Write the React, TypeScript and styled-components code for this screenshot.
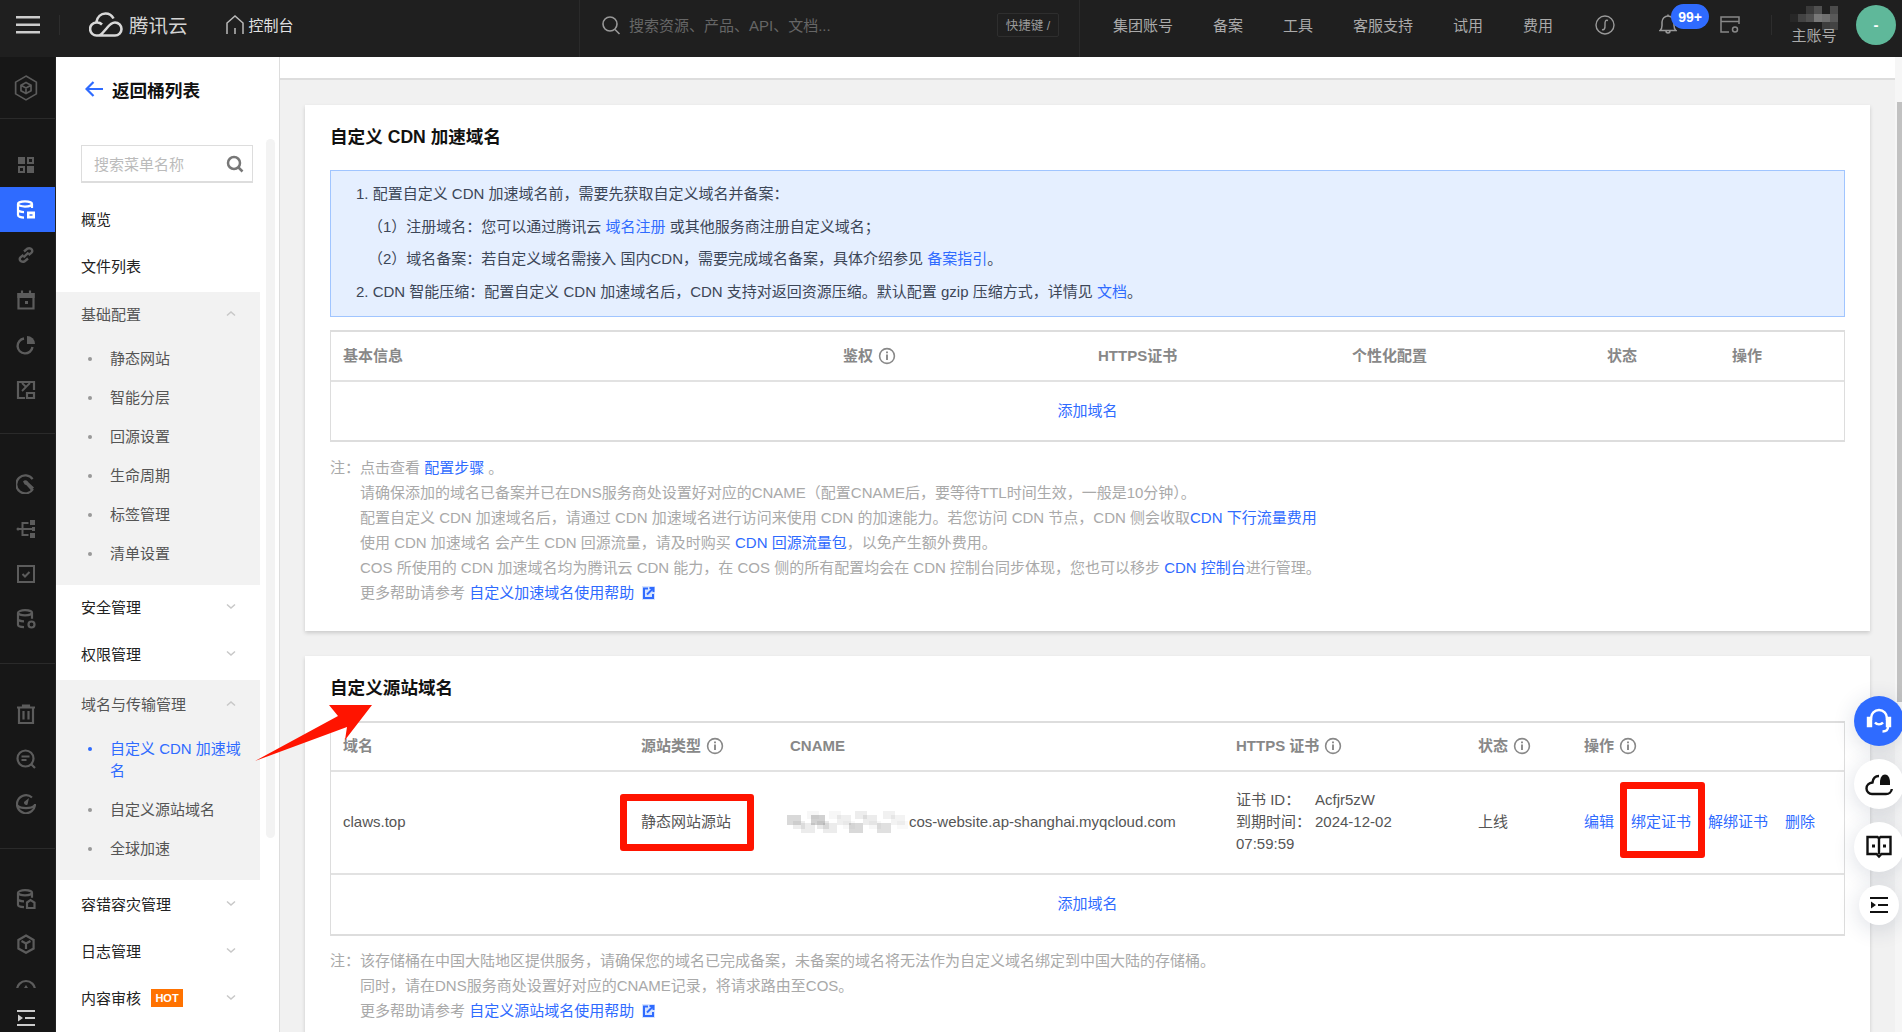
import React from 'react';
import styled, { createGlobalStyle } from 'styled-components';

const GlobalStyle = createGlobalStyle`
  html, body {
    margin: 0;
    padding: 0;
    background: #f1f1f1;
  }
  body {
    font-family: "Liberation Sans", "Noto Sans CJK SC", sans-serif;
    font-size: 15px;
    color: #444;
  }
  * {
    box-sizing: border-box;
  }
`;

const BLUE = '#2f6bff';
const RED = '#ff1400';

const Page = styled.div`
  position: relative;
  width: 1902px;
  height: 1032px;
  overflow: hidden;
  display: flex;
  flex-direction: column;
`;

/* ---------- top bar ---------- */

const TopBar = styled.header`
  height: 57px;
  flex: none;
  padding-bottom: 8px;
  display: flex;
  align-items: center;
  background: #1f1f1f;
  color: #aaa;
`;

const TopLeft = styled.div`
  width: 579px;
  height: 100%;
  display: flex;
  align-items: center;
  padding-left: 16px;
`;

const VDivider = styled.span<{ $left?: number; $right?: number }>`
  width: 1px;
  height: 20px;
  background: #2d2d2d;
  margin-left: ${p => p.$left ?? 0}px;
  margin-right: ${p => p.$right ?? 0}px;
`;

const LogoText = styled.span`
  font-size: 19.5px;
  color: #d4d4d4;
  margin-left: 6px;
  margin-right: 38px;
`;

const ConsoleLink = styled.span`
  color: #e2e2e2;
  margin-left: 5px;
`;

const TopSearch = styled.div`
  width: 501px;
  height: 57px;
  margin-bottom: -8px;
  padding-bottom: 8px;
  display: flex;
  align-items: center;
  padding-left: 21px;
  border-left: 1px solid #2a2a2a;
  border-right: 1px solid #2a2a2a;
  color: #666;
`;

const SearchHint = styled.span`
  margin-left: 8px;
  flex: 1;
`;

const ShortcutKey = styled.span`
  width: 62px;
  height: 24px;
  margin-right: 20px;
  border: 1px solid #2e2e2e;
  border-radius: 2px;
  font-size: 12.5px;
  color: #9a9a9a;
  display: flex;
  align-items: center;
  justify-content: center;
`;

const TopNav = styled.nav`
  display: flex;
  align-items: center;
  gap: 40px;
  padding-left: 33px;
`;

const TopTools = styled.div`
  display: flex;
  align-items: center;
  height: 100%;
`;

const CircleS = styled.svg`
  margin-left: 42px;
`;

const BellWrap = styled.span`
  position: relative;
  display: flex;
  margin-left: 44px;
  margin-right: 43px;
`;

const Badge = styled.span`
  position: absolute;
  left: 12px;
  top: -10px;
  width: 38px;
  height: 25px;
  border-radius: 13px;
  background: ${BLUE};
  color: #fff;
  font-size: 14px;
  font-weight: 700;
  display: flex;
  align-items: center;
  justify-content: center;
`;

const Account = styled.div`
  width: 46px;
  margin-left: 19px;
  height: 57px;
  margin-bottom: -8px;
  display: flex;
  flex-direction: column;
  align-items: center;
  padding-top: 4px;
  line-height: 20px;
  white-space: nowrap;
`;

const AccountRole = styled.span`
  margin-top: -4px;
`;

const Avatar = styled.span`
  width: 40px;
  height: 40px;
  margin-left: 19px;
  border-radius: 50%;
  background: #5fb89a;
  color: #fff;
  font-weight: 700;
  display: flex;
  align-items: center;
  justify-content: center;
`;

/* ---------- left rail ---------- */

const Body = styled.div`
  flex: 1;
  min-height: 0;
  display: flex;
`;

const Rail = styled.aside`
  width: 56px;
  flex: none;
  background: #171717;
  border-right: 1px solid #222;
  display: flex;
  flex-direction: column;
  overflow: hidden;
`;

const RailGroup = styled.div<{ $height: number; $pad: number; $last?: boolean }>`
  height: ${p => p.$height}px;
  flex: none;
  padding-top: ${p => p.$pad}px;
  border-bottom: ${p => (p.$last ? 'none' : '1px solid #2a2a2a')};
  overflow: hidden;
`;

const RailItem = styled.div<{ $active?: boolean }>`
  height: 45px;
  padding-right: 3px;
  display: flex;
  align-items: center;
  justify-content: center;
  background: ${p => (p.$active ? BLUE : 'transparent')};
  color: ${p => (p.$active ? '#fff' : '#5c5c5c')};
`;

const RailToggle = styled.div`
  height: 44px;
  flex: none;
  background: #171717;
  padding-right: 3px;
  padding-top: 16px;
  display: flex;
  align-items: center;
  justify-content: center;
  color: #ccc;
`;

/* ---------- side menu ---------- */

const Sidebar = styled.aside`
  width: 224px;
  flex: none;
  background: #fff;
  border-right: 1px solid #ddd;
  overflow: hidden;
  display: flex;
  flex-direction: column;
`;

const BackRow = styled.div`
  height: 82px;
  flex: none;
  display: flex;
  align-items: center;
  padding: 0 0 18px 29px;
  gap: 9px;
  font-size: 17.6px;
  font-weight: 700;
  color: #111;
`;

const SideBody = styled.div`
  display: flex;
`;

const Menu = styled.div`
  width: 204px;
  flex: none;
`;

const MenuTrack = styled.div`
  width: 9px;
  height: 699px;
  margin-left: 6px;
  border-radius: 5px;
  background: #f3f3f3;
`;

const SearchBox = styled.div`
  width: 172px;
  height: 38px;
  margin: 6px 0 12px 25px;
  border: 1px solid #ddd;
  border-bottom-width: 2px;
  padding: 0 8px 0 12px;
  display: flex;
  align-items: center;
  justify-content: space-between;
  color: #bbb;
`;

const PlainItems = styled.div<{ $gap: number }>`
  padding-bottom: ${p => p.$gap}px;
`;

const MenuRow = styled.div<{ $lift?: boolean }>`
  height: 47px;
  padding: 0 24px ${p => (p.$lift ? '3px' : '0')} 25px;
  display: flex;
  align-items: center;
  color: #222;
`;

const MenuGroup = styled.div<{ $end: number }>`
  background: #f2f2f2;
  padding-bottom: ${p => p.$end}px;
`;

const GroupHead = styled(MenuRow)<{ $h: number; $under: number }>`
  height: ${p => p.$h}px;
  padding-bottom: ${p => p.$under}px;
  color: #555;
`;

const Chevron = styled.svg`
  margin-left: auto;
  color: #c8c8c8;
`;

const SubItem = styled.div<{ $active?: boolean }>`
  display: flex;
  align-items: flex-start;
  padding: 8.5px 12px 8.5px 32px;
  line-height: 22px;
  color: ${p => (p.$active ? BLUE : '#555')};
`;

const Dot = styled.span<{ $active?: boolean }>`
  width: 4px;
  height: 4px;
  flex: none;
  margin: 9px 18px 0 0;
  border-radius: 50%;
  background: ${p => (p.$active ? BLUE : '#999')};
`;

const HotTag = styled.span`
  width: 32px;
  height: 18px;
  margin-left: 10px;
  background: #ff7200;
  color: #fff;
  font-size: 11px;
  font-weight: 700;
  display: flex;
  align-items: center;
  justify-content: center;
`;

/* ---------- main ---------- */

const Main = styled.main`
  flex: 1;
  min-width: 0;
  display: flex;
`;

const Content = styled.div`
  width: 1615px;
  flex: none;
  overflow: hidden;
`;

const CrumbStrip = styled.div`
  height: 23px;
  background: #fff;
  border-bottom: 2px solid #ddd;
`;

const Cards = styled.div`
  padding: 25px 25px 0;
  display: flex;
  flex-direction: column;
  gap: 25px;
`;

const Card = styled.section`
  background: #fff;
  padding: 20px 25px 25.5px 25px;
  box-shadow: 0 2px 4px rgba(0, 0, 0, 0.16);
`;

const CardTitle = styled.h2`
  margin: 0;
  font-size: 17.6px;
  line-height: 24px;
  font-weight: 700;
  color: #111;
`;

const InfoBox = styled.div`
  margin-top: 21px;
  height: 147px;
  padding: 7px 25px;
  background: #e5efff;
  border: 1px solid #a0c5ff;
  line-height: 32.7px;
  color: #3c4657;
`;

const InfoLine = styled.div<{ $indent?: boolean }>`
  padding-left: ${p => (p.$indent ? '12px' : '0')};
`;

const A = styled.span`
  color: ${BLUE};
`;

const Table = styled.div<{ $top: number }>`
  margin-top: ${p => p.$top}px;
  border: 1px solid #ddd;
  border-width: 2px 1px 2px 1px;
`;

const Grid = styled.div<{ $cols: string; $height: number; $head?: boolean }>`
  display: grid;
  grid-template-columns: ${p => p.$cols};
  align-items: center;
  height: ${p => p.$height}px;
  padding-left: 12px;
  border-bottom: 2px solid #e2e2e2;
  font-weight: ${p => (p.$head ? 700 : 400)};
  color: ${p => (p.$head ? '#888' : '#555')};
  line-height: 22px;
`;

const HeadCell = styled.span`
  display: flex;
  align-items: center;
  gap: 5px;
`;

const AddRow = styled.div<{ $height: number }>`
  height: ${p => p.$height}px;
  display: flex;
  align-items: center;
  justify-content: center;
  padding-bottom: 3px;
  color: ${BLUE};
`;

const Notes = styled.div<{ $top: number }>`
  margin-top: ${p => p.$top}px;
  line-height: 25px;
  color: #a9a9a9;
  white-space: nowrap;
`;

const NoteLine = styled.div<{ $indent?: boolean }>`
  padding-left: ${p => (p.$indent ? '30px' : '0')};
`;

const ExtIcon = styled.svg`
  margin-left: 8px;
  vertical-align: -2px;
`;

const RowActions = styled.div`
  display: flex;
  gap: 17px;
  color: ${BLUE};
  white-space: nowrap;
`;

const Marked = styled.span<{ $top: number; $bottom: number; $left: number; $right: number }>`
  position: relative;
  display: inline-block;
  &::after {
    content: '';
    position: absolute;
    top: -${p => p.$top}px;
    bottom: -${p => p.$bottom}px;
    left: -${p => p.$left}px;
    right: -${p => p.$right}px;
    border: 7px solid ${RED};
    border-radius: 3px;
  }
`;

const CnameCell = styled.div`
  display: flex;
  align-items: center;
  gap: 1px;
  margin-left: -3px;
  white-space: nowrap;
`;

const CertLine = styled.div`
  display: grid;
  grid-template-columns: 79px auto;
`;

const ScrollBar = styled.div`
  flex: 1;
  background: #f6f6f6;
  padding: 45px 0 0 2px;
`;

const ScrollThumb = styled.div`
  height: 600px;
  background: #c1c1c1;
`;

/* ---------- overlays ---------- */

const Arrow = styled.svg`
  position: absolute;
  left: 0;
  top: 0;
  pointer-events: none;
`;

const FloatStack = styled.div`
  position: absolute;
  left: 1854px;
  top: 696px;
  width: 50px;
  display: flex;
  flex-direction: column;
  align-items: center;
  gap: 13px;
`;

const FloatButton = styled.div<{ $size: number; $primary?: boolean }>`
  width: ${p => p.$size}px;
  height: ${p => p.$size}px;
  border-radius: 50%;
  background: ${p => (p.$primary ? BLUE : '#fff')};
  color: ${p => (p.$primary ? '#fff' : '#111')};
  box-shadow: 0 4px 22px rgba(30, 50, 90, 0.16);
  display: flex;
  align-items: center;
  justify-content: center;
`;

/* ---------- drawings ---------- */

type IconProps = { size?: number; children: React.ReactNode; sw?: number };

function Ico({ size = 20, children, sw = 2 }: IconProps) {
  return (
    <svg width={size} height={size} viewBox="0 0 20 20" fill="none" stroke="currentColor" strokeWidth={sw}>
      {children}
    </svg>
  );
}

function Info() {
  return (
    <svg width="18" height="18" viewBox="0 0 17 17" fill="none" stroke="#888" strokeWidth="1.5">
      <circle cx="8.5" cy="8.5" r="7" />
      <path d="M8.5 7.2v5" strokeWidth="1.8" />
      <path d="M8.5 4.2v1.7" strokeWidth="1.8" />
    </svg>
  );
}

function ChevronIcon({ up }: { up?: boolean }) {
  return (
    <Chevron width="10" height="7" viewBox="0 0 10 7" fill="none" stroke="currentColor" strokeWidth="1.5">
      <path d={up ? 'M1 5.5 5 2l4 3.5' : 'M1 1.5 5 5l4-3.5'} />
    </Chevron>
  );
}

function External() {
  return (
    <ExtIcon width="13" height="14" viewBox="0 0 13 14">
      <rect width="13" height="14" fill="#d6e4ff" />
      <path d="M6 2.5H2v9.5h9V8" fill="none" stroke={BLUE} strokeWidth="2" />
      <path d="M5 8.5 10.5 3M7.5 2h4v4" fill="none" stroke={BLUE} strokeWidth="2" />
    </ExtIcon>
  );
}

const mosaicLight = [
  [0, 0, .25], [14, 8, .12], [24, 0, .3], [36, 8, .12], [50, 0, .1], [62, 8, .25],
  [76, 0, .12], [90, 8, .2], [104, 0, .08],
];

const mosaicDark = [
  [0, 10, 0.04], [8, 10, 0.16], [16, 10, 0.22], [16, 2, 0.12], [24, 10, 0.4], [24, 2, 0.22],
  [32, 10, 0.36], [32, 18, 0.14], [40, 2, 0.2], [40, 10, 0.26], [40, 18, 0.16],
];

function Mosaic({ width, dark }: { width: number; dark?: boolean }) {
  return (
    <svg width={width} height={dark ? 26 : 22}>
      {dark
        ? mosaicDark.map(([x, y, o], i) => <rect key={i} x={x} y={y} width={8} height={8} fill="#fff" opacity={o} />)
        : mosaicLight.map(([x, y, o], i) => (
            <g key={i}>
              <rect x={x} y={y + 4} width={14} height={10} fill="#666" opacity={o} />
              <rect x={x + 6} y={(y + 10) % 18} width={12} height={8} fill="#999" opacity={o * 0.7} />
            </g>
          ))}
    </svg>
  );
}

const railGroups: { height: number; pad: number; active?: number; icons: React.ReactNode[] }[] = [
  {
    height: 62,
    pad: 8,
    icons: [
      <Ico size={28} sw={1.2}>
        <path d="M10 1.5 17.4 5.8v8.4L10 18.5l-7.4-4.3V5.8z" />
        <path d="M10 6l3.6 2v4L10 14l-3.6-2V8zM6.4 8 10 10l3.6-2M10 10v4" />
      </Ico>,
    ],
  },
  {
    height: 315,
    pad: 23,
    active: 1,
    icons: [
      <Ico>
        <path d="M2 2h7v7H2z" fill="currentColor" stroke="none" />
        <path d="M12 3h5v5h-5zM3 12h5v5H3z" />
        <path d="M11 11h7v7h-7z" fill="currentColor" stroke="none" />
      </Ico>,
      <Ico sw={2.2}>
        <ellipse cx="9" cy="4" rx="7" ry="2.6" />
        <path d="M2 4v11c0 1.5 3 2.6 6 2.6M16 4v4M2 9.5c0 1.5 3 2.6 6 2.6" />
        <path d="M11 11.5h8v7h-8z" fill="currentColor" stroke="none" />
        <path d="M13.5 15h3" stroke="#2f6bff" strokeWidth="1.4" />
      </Ico>,
      <Ico sw={2.4}>
        <path d="M8 6.5 11.5 3.6c2.3-1.2 5.4.6 4.6 3.2-.3 1-2 2-3.6 3.2M12 13.5 8.5 16.4c-2.3 1.2-5.4-.6-4.6-3.2.3-1 2-2 3.6-3.2" />
        <path d="M7.5 12.5 12.5 7.5" />
      </Ico>,
      <Ico sw={2.2}>
        <path d="M2.5 4h15v14.5h-15zM6 .5v4M14 .5v4" />
        <path d="M2.5 4h15v3h-15z" fill="currentColor" />
        <path d="M9 11h3v3H9z" fill="currentColor" stroke="none" />
      </Ico>,
      <Ico sw={2.4}>
        <path d="M8 3.5a7.5 7.5 0 1 0 8.5 8.5" />
        <path d="M11 1v8h8a8 8 0 0 0-8-8z" fill="currentColor" stroke="none" />
      </Ico>,
      <Ico sw={2.2}>
        <path d="M9 18H2V2h16v8" />
        <path d="M6 3l4 4 4-4M6 11l4-4" strokeWidth="1.8" />
        <path d="M11 13h7v5h-7z" />
      </Ico>,
    ],
  },
  {
    height: 230,
    pad: 27,
    icons: [
      <Ico sw={2.2}>
        <path d="M16.6 5.2A9 9 0 1 0 17 15" />
        <path d="M7 7.5c1.3-1.6 3.5-1.6 4.6-.2l1 1.3 5.4 5-2.8 2.8-5-5.4-1.5-.5L7 7.5z" fill="currentColor" stroke="none" />
      </Ico>,
      <Ico>
        <path d="M2 10h15M6.5 10V4h6M6.5 10v6h6" />
        <circle cx="2" cy="10" r="1.5" fill="currentColor" stroke="none" />
        <path d="M14 1h5v5h-5zM16 8h3v4h-3zM14 14h5v5h-5z" fill="currentColor" stroke="none" />
      </Ico>,
      <Ico>
        <path d="M2 2h16v16H2z" />
        <path d="M6.5 10 9 12.5l4.5-4.5" />
      </Ico>,
      <Ico sw={2.2}>
        <ellipse cx="9" cy="3.8" rx="7" ry="2.6" />
        <path d="M2 3.8v12c0 1.3 2.5 2.2 6 2.4M16 3.8v6M2 10c0 1.3 3 2.3 6 2.3" />
        <circle cx="15.5" cy="15.5" r="3" />
      </Ico>,
    ],
  },
  {
    height: 185,
    pad: 27,
    icons: [
      <Ico sw={2.2}>
        <path d="M1 3.5h18M7 3.5V1.5h6v2M3 3.5V19h14V3.5" />
        <path d="M7.5 7v8.5M12.5 7v8.5" />
      </Ico>,
      <Ico sw={2.2}>
        <circle cx="9.5" cy="9.5" r="8" />
        <path d="M5.5 7.5h8M5.5 11h5M15.5 15.5 19 19" />
      </Ico>,
      <Ico sw={2.2}>
        <path d="M16 3.5A9 9 0 1 0 19 10M1.5 11.5c3 3.5 14 3.5 17 0" />
        <path d="M8 8l5-4-1.5 6.5c-.8 1.4-4 .2-3.5-2.5z" fill="currentColor" stroke="none" />
      </Ico>,
    ],
  },
  {
    height: 139,
    pad: 27,
    icons: [
      <Ico sw={2.2}>
        <ellipse cx="9" cy="3.8" rx="7" ry="2.6" />
        <path d="M2 3.8v12c0 1.3 2.5 2.2 6 2.4M16 3.8v5M2 10c0 1.3 3 2.3 6 2.3" />
        <path d="M11 13.5l3.5-2.5 4 2.5V19H11z" />
      </Ico>,
      <Ico sw={2.2}>
        <path d="M10 1.5 17.6 6v8.5L10 18.8l-7.6-4.3V6z" />
        <path d="M10 9.5 5.5 7M10 9.5 14.5 7M10 9.5V15" />
      </Ico>,
      <Ico sw={2.2}>
        <circle cx="10" cy="11" r="9" />
        <path d="M10 6l4 6H6z" fill="currentColor" stroke="none" />
      </Ico>,
    ],
  },
];

function IndentIcon({ size = 18 }: { size?: number }) {
  return (
    <svg width={size} height={size} viewBox="0 0 18 18" fill="currentColor">
      <path d="M0 1h18v2H0zM8 8h10v2H8zM0 15h18v2H0zM1 5.5 6 9l-5 3.5z" />
    </svg>
  );
}

const Table1Cols = '500px 255px 254px 255px 125px 1fr';
const Table2Cols = '298px 149px 446px 242px 106px 1fr';

export default function App() {
  return (
    <Page>
      <GlobalStyle />
      <TopBar>
        <TopLeft>
          <svg width="24" height="18" viewBox="0 0 24 18" fill="#ccc">
            <path d="M0 0h24v2.4H0zM0 7.5h24v2.4H0zM0 15h24v2.4H0z" />
          </svg>
          <VDivider $left={19} $right={29} />
          <svg width="34" height="25" viewBox="0 0 34 25" fill="none" stroke="#d8d8d8" strokeWidth="2.6">
            <path d="M8 23.5a6.5 6.5 0 0 1-.8-13C8.2 5 12 1.5 16.5 1.5c3.5 0 6.5 2 8 5M8 23.5h18a6.5 6.5 0 0 0 0-13c-4 0-6.5 3.5-8.5 6l-4 4.5c-1 1.2-2.3 2.5-4 2.5M7.5 10.5c2-.3 4 .5 5.5 2" />
          </svg>
          <LogoText>腾讯云</LogoText>
          <svg width="18" height="20" viewBox="0 0 18 20" fill="none" stroke="#bbb" strokeWidth="1.5">
            <path d="M1 19V8l8-7 8 7v11M9 19v-6" />
          </svg>
          <ConsoleLink>控制台</ConsoleLink>
        </TopLeft>
        <TopSearch>
          <svg width="20" height="20" viewBox="0 0 20 20" fill="none" stroke="#999" strokeWidth="1.6">
            <circle cx="9" cy="9" r="7" />
            <path d="M14 14.5 18.5 19" />
          </svg>
          <SearchHint>搜索资源、产品、API、文档...</SearchHint>
          <ShortcutKey>快捷键 /</ShortcutKey>
        </TopSearch>
        <TopNav>
          <span>集团账号</span>
          <span>备案</span>
          <span>工具</span>
          <span>客服支持</span>
          <span>试用</span>
          <span>费用</span>
        </TopNav>
        <TopTools>
          <CircleS width="20" height="20" viewBox="0 0 20 20" fill="none" stroke="#999" strokeWidth="1.4">
            <circle cx="10" cy="10" r="9" />
            <path d="M13 5.5c-2.500-1-3.200.8-3 4.500.2 3.500-.8 5.500-3 4.500" />
          </CircleS>
          <BellWrap>
            <svg width="18" height="21" viewBox="0 0 18 21" fill="none" stroke="#999" strokeWidth="1.5">
              <path d="M1 16.5c1.500-1 2-2.500 2-5V8a6 6 0 0 1 12 0v3.500c0 2.500.5 4 2 5zM7 17c0 2.500 4 2.500 4 0M9 2V.5" />
            </svg>
            <Badge>99+</Badge>
          </BellWrap>
          <svg width="20" height="18" viewBox="0 0 20 18" fill="none" stroke="#888" strokeWidth="1.5">
            <path d="M9 16H1V1h18v7M1 5.500h18" />
            <circle cx="15" cy="13.500" r="2.500" />
          </svg>
          <VDivider $left={31} />
          <Account>
            <Mosaic width={48} dark />
            <AccountRole>主账号</AccountRole>
          </Account>
          <Avatar>-</Avatar>
        </TopTools>
      </TopBar>
      <Body>
        <Rail>
          {railGroups.map((group, g) => (
            <RailGroup key={g} $height={group.height} $pad={group.pad} $last={g === railGroups.length - 1}>
              {group.icons.map((icon, i) => (
                <RailItem key={i} $active={group.active === i}>
                  {icon}
                </RailItem>
              ))}
            </RailGroup>
          ))}
          <RailToggle>
            <IndentIcon />
          </RailToggle>
        </Rail>
        <Sidebar>
          <BackRow>
            <svg width="18" height="16" viewBox="0 0 18 16" fill="none" stroke={BLUE} strokeWidth="2.2">
              <path d="M18 8H2M8.5 1 1.5 8l7 7" />
            </svg>
            返回桶列表
          </BackRow>
          <SideBody>
            <Menu>
              <SearchBox>
                搜索菜单名称
                <svg width="18" height="18" viewBox="0 0 18 18" fill="none" stroke="#777" strokeWidth="2.5">
                  <circle cx="8" cy="8" r="6" />
                  <path d="M12.5 12.5 16.5 16.5" />
                </svg>
              </SearchBox>
              <PlainItems $gap={3}>
                <MenuRow>概览</MenuRow>
                <MenuRow>文件列表</MenuRow>
              </PlainItems>
              <MenuGroup $end={11}>
                <GroupHead $h={47.5} $under={5.5}>
                  基础配置
                  <ChevronIcon up />
                </GroupHead>
                {['静态网站', '智能分层', '回源设置', '生命周期', '标签管理', '清单设置'].map(label => (
                  <SubItem key={label}>
                    <Dot />
                    {label}
                  </SubItem>
                ))}
              </MenuGroup>
              <PlainItems $gap={1.5}>
                <MenuRow $lift>
                  安全管理
                  <ChevronIcon />
                </MenuRow>
                <MenuRow $lift>
                  权限管理
                  <ChevronIcon />
                </MenuRow>
              </PlainItems>
              <MenuGroup $end={12}>
                <GroupHead $h={49} $under={2}>
                  域名与传输管理
                  <ChevronIcon up />
                </GroupHead>
                <SubItem $active>
                  <Dot $active />
                  自定义 CDN 加速域名
                </SubItem>
                <SubItem>
                  <Dot />
                  自定义源站域名
                </SubItem>
                <SubItem>
                  <Dot />
                  全球加速
                </SubItem>
              </MenuGroup>
              <MenuRow>
                容错容灾管理
                <ChevronIcon />
              </MenuRow>
              <MenuRow>
                日志管理
                <ChevronIcon />
              </MenuRow>
              <MenuRow>
                内容审核
                <HotTag>HOT</HotTag>
                <ChevronIcon />
              </MenuRow>
            </Menu>
            <MenuTrack />
          </SideBody>
        </Sidebar>
        <Main>
          <Content>
            <CrumbStrip />
            <Cards>
              <Card>
                <CardTitle>自定义 CDN 加速域名</CardTitle>
                <InfoBox>
                  <InfoLine>1. 配置自定义 CDN 加速域名前，需要先获取自定义域名并备案：</InfoLine>
                  <InfoLine $indent>（1）注册域名：您可以通过腾讯云 <A>域名注册</A> 或其他服务商注册自定义域名；</InfoLine>
                  <InfoLine $indent>（2）域名备案：若自定义域名需接入 国内CDN，需要完成域名备案，具体介绍参见 <A>备案指引</A>。</InfoLine>
                  <InfoLine>2. CDN 智能压缩：配置自定义 CDN 加速域名后，CDN 支持对返回资源压缩。默认配置 gzip 压缩方式，详情见 <A>文档</A>。</InfoLine>
                </InfoBox>
                <Table $top={13}>
                  <Grid $cols={Table1Cols} $height={50} $head>
                    <HeadCell>基本信息</HeadCell>
                    <HeadCell>鉴权 <Info /></HeadCell>
                    <HeadCell>HTTPS证书</HeadCell>
                    <HeadCell>个性化配置</HeadCell>
                    <HeadCell>状态</HeadCell>
                    <HeadCell>操作</HeadCell>
                  </Grid>
                  <AddRow $height={58}>添加域名</AddRow>
                </Table>
                <Notes $top={13}>
                  <NoteLine>注：点击查看 <A>配置步骤</A> 。</NoteLine>
                  <NoteLine $indent>请确保添加的域名已备案并已在DNS服务商处设置好对应的CNAME（配置CNAME后，要等待TTL时间生效，一般是10分钟）。</NoteLine>
                  <NoteLine $indent>配置自定义 CDN 加速域名后，请通过 CDN 加速域名进行访问来使用 CDN 的加速能力。若您访问 CDN 节点，CDN 侧会收取<A>CDN 下行流量费用</A></NoteLine>
                  <NoteLine $indent>使用 CDN 加速域名 会产生 CDN 回源流量，请及时购买 <A>CDN 回源流量包</A>，以免产生额外费用。</NoteLine>
                  <NoteLine $indent>COS 所使用的 CDN 加速域名均为腾讯云 CDN 能力，在 COS 侧的所有配置均会在 CDN 控制台同步体现，您也可以移步 <A>CDN 控制台</A>进行管理。</NoteLine>
                  <NoteLine $indent>更多帮助请参考 <A>自定义加速域名使用帮助</A><External /></NoteLine>
                </Notes>
              </Card>
              <Card>
                <CardTitle>自定义源站域名</CardTitle>
                <Table $top={21}>
                  <Grid $cols={Table2Cols} $height={49} $head>
                    <HeadCell>域名</HeadCell>
                    <HeadCell>源站类型 <Info /></HeadCell>
                    <HeadCell>CNAME</HeadCell>
                    <HeadCell>HTTPS 证书 <Info /></HeadCell>
                    <HeadCell>状态 <Info /></HeadCell>
                    <HeadCell>操作 <Info /></HeadCell>
                  </Grid>
                  <Grid $cols={Table2Cols} $height={103}>
                    <span>claws.top</span>
                    <span>
                      <Marked $top={17} $bottom={18} $left={21} $right={23}>静态网站源站</Marked>
                    </span>
                    <CnameCell>
                      <Mosaic width={121} />
                      cos-website.ap-shanghai.myqcloud.com
                    </CnameCell>
                    <div>
                      <CertLine><span>证书 ID：</span><span>Acfjr5zW</span></CertLine>
                      <CertLine><span>到期时间：</span><span>2024-12-02</span></CertLine>
                      <div>07:59:59</div>
                    </div>
                    <span>上线</span>
                    <RowActions>
                      <span>编辑</span>
                      <Marked $top={29} $bottom={25} $left={11} $right={14}>绑定证书</Marked>
                      <span>解绑证书</span>
                      <span>删除</span>
                    </RowActions>
                  </Grid>
                  <AddRow $height={59}>添加域名</AddRow>
                </Table>
                <Notes $top={12}>
                  <NoteLine>注：该存储桶在中国大陆地区提供服务，请确保您的域名已完成备案，未备案的域名将无法作为自定义域名绑定到中国大陆的存储桶。</NoteLine>
                  <NoteLine $indent>同时，请在DNS服务商处设置好对应的CNAME记录，将请求路由至COS。</NoteLine>
                  <NoteLine $indent>更多帮助请参考 <A>自定义源站域名使用帮助</A><External /></NoteLine>
                </Notes>
              </Card>
            </Cards>
          </Content>
          <ScrollBar>
            <ScrollThumb />
          </ScrollBar>
        </Main>
      </Body>
      <Arrow width="1902" height="1032">
        <polygon points="255,761 338,716 329,705 372,705 345,740 347,727" fill={RED} />
      </Arrow>
      <FloatStack>
        <FloatButton $size={50} $primary>
          <svg width="28" height="28" viewBox="0 0 28 28" fill="none" stroke="currentColor" strokeWidth="2.4">
            <path d="M6 13V11a8 8 0 0 1 16 0v2" />
            <path d="M3 11h3v8H3zM22 11h3v8h-3z" fill="currentColor" />
            <path d="M10 15.5c2 2.5 6 2.5 8 0M23 20c0 3-2.5 4.5-5.5 4.5" />
          </svg>
        </FloatButton>
        <FloatButton $size={50}>
          <svg width="28" height="26" viewBox="0 0 28 26" fill="none" stroke="currentColor" strokeWidth="2.4">
            <path d="M14 5c-3.5 0-6 2.5-6.5 6.5-3.5.3-6 2.800-6 6 0 3 2.500 5.500 5.500 5.500h14c3 0 5.500-2 5.800-5" />
            <path d="M15 11c0-4 2-7.500 5-7.500s5 3.500 5 7.500v3H15z" fill="currentColor" stroke="none" />
          </svg>
        </FloatButton>
        <FloatButton $size={50}>
          <svg width="26" height="24" viewBox="0 0 26 24" fill="none" stroke="currentColor" strokeWidth="2.4">
            <path d="M1.5 2h10l1.500 1.500L14.500 2h10v17h-9L13 21.500 10.500 19h-9zM13 3.500V19" />
            <path d="M6 9.500h3v3H6zM17 9.500h3v3h-3z" fill="currentColor" stroke="none" />
          </svg>
        </FloatButton>
        <FloatButton $size={40}>
          <IndentIcon />
        </FloatButton>
      </FloatStack>
    </Page>
  );
}
